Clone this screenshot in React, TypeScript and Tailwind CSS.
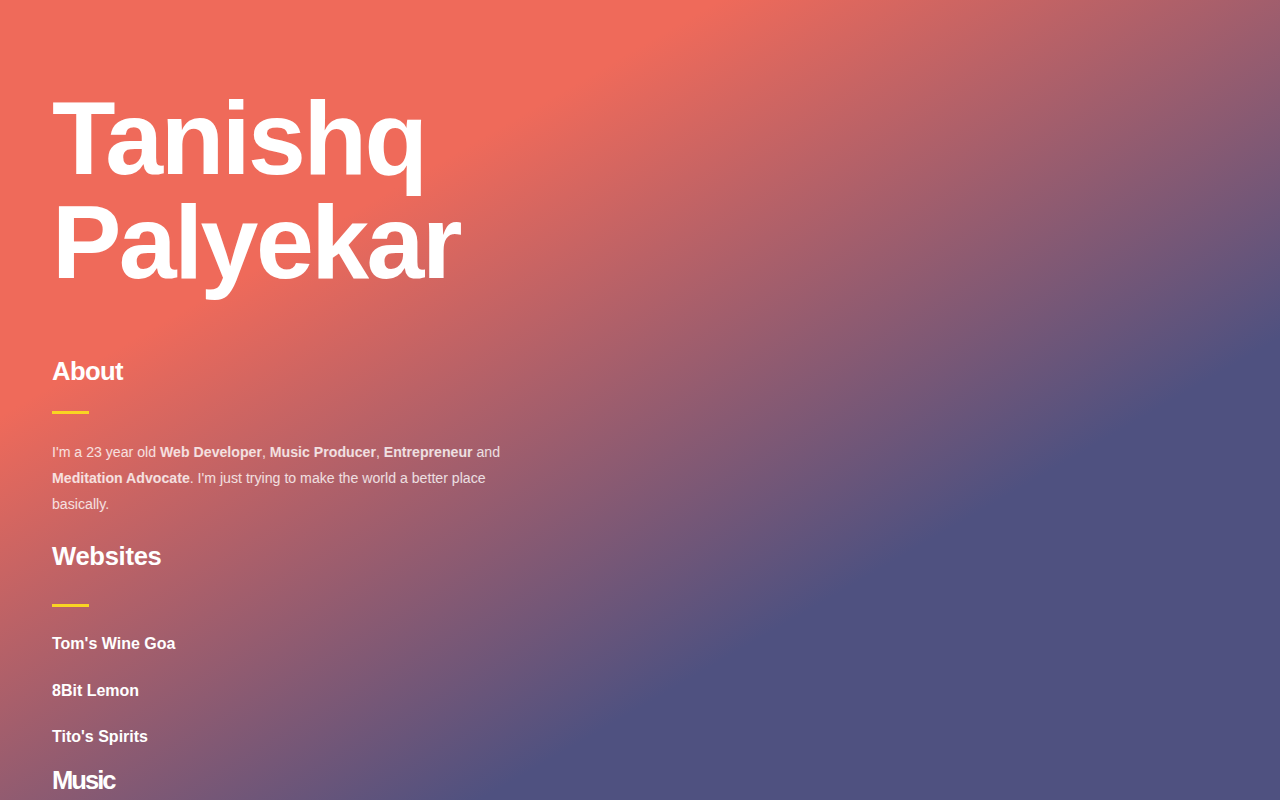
import React from "react";

const Bar = ({ className = "" }: { className?: string }) => (
  <div className={`h-[3px] w-[37px] bg-[#f9d423] ${className}`} />
);

export default function App() {
  return (
    <div
      className="min-h-screen w-full bg-fixed bg-[linear-gradient(150deg,#ef6a5a_27%,#4f5180_70%)] text-white"
      style={{ fontFamily: '"Liberation Sans", Arial, Helvetica, sans-serif' }}
    >
      <div className="px-[52px] pt-[86px] pb-24">
        <h1 className="text-[104px] font-bold leading-[104px] tracking-[-2.5px]">
          Tanishq
          <br />
          Palyekar
        </h1>

        <section className="mt-[62px]">
          <h2 className="text-[25.6px] font-bold leading-[1.2] tracking-[-0.6px]">About</h2>
          <Bar className="mt-[24px]" />
          <p className="mt-[25px] max-w-[460px] text-[14.15px] leading-[26px] text-white/80">
            I'm a 23 year old <strong className="font-bold">Web Developer</strong>,{" "}
            <strong className="font-bold">Music Producer</strong>,{" "}
            <strong className="font-bold">Entrepreneur</strong> and{" "}
            <strong className="font-bold">Meditation Advocate</strong>. I'm just trying to make the
            world a better place basically.
          </p>
        </section>

        <section className="mt-[24px]">
          <h2 className="text-[25.6px] font-bold leading-[1.2] tracking-[-0.3px]">Websites</h2>
          <Bar className="mt-[33px]" />
          <ul className="mt-[25px] flex flex-col gap-[22.5px]">
            <li>
              <a className="block text-[16px] font-bold leading-[24px] text-white">Tom's Wine Goa</a>
            </li>
            <li>
              <a className="block text-[16px] font-bold leading-[24px] text-white">8Bit Lemon</a>
            </li>
            <li>
              <a className="block text-[16px] font-bold leading-[24px] text-white">Tito's Spirits</a>
            </li>
          </ul>
        </section>

        <section className="mt-[16px]">
          <h2 className="text-[25.6px] font-bold leading-[1.2] tracking-[-2px]">Music</h2>
          <Bar className="mt-[32px]" />
          <ul className="mt-[24px] flex flex-col gap-[22.5px]">
            <li>
              <a className="block text-[16px] font-bold leading-[24px] text-white">SoundCloud</a>
            </li>
            <li>
              <a className="block text-[16px] font-bold leading-[24px] text-white">Spotify</a>
            </li>
          </ul>
        </section>
      </div>
    </div>
  );
}
